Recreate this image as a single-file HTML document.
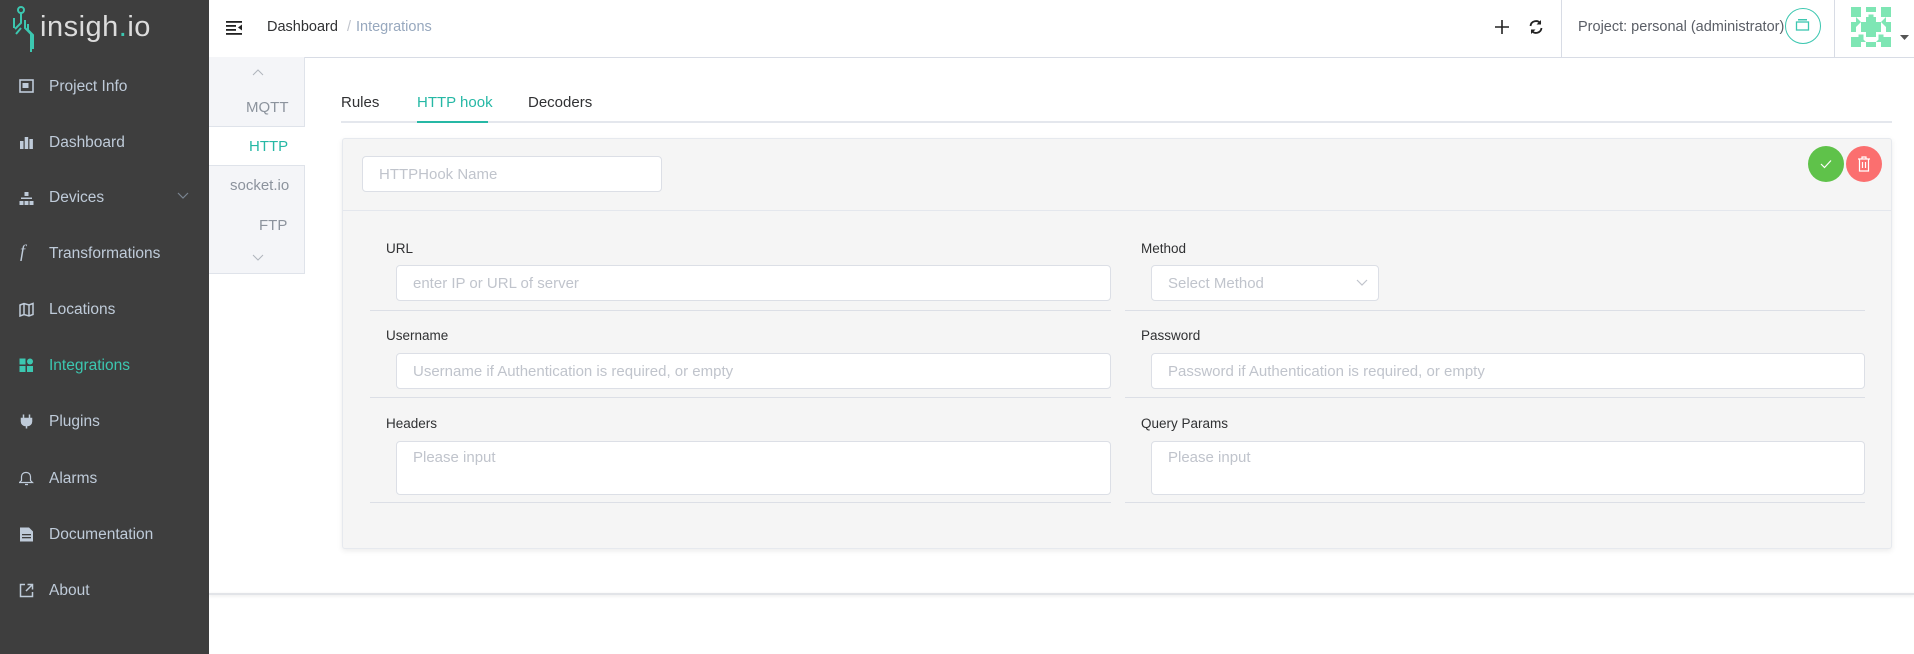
<!DOCTYPE html>
<html><head><meta charset="utf-8"><style>
*{box-sizing:border-box;margin:0;padding:0}
body{width:1914px;height:654px;position:relative;background:#fff;font-family:"Liberation Sans",sans-serif;overflow:hidden}
.a{position:absolute}
#sb{left:0;top:0;width:209px;height:654px;background:#3e3e3e}
.mi{position:absolute;left:49px;font-size:15.5px;color:#bfcbd9}
.ic{position:absolute;left:19px;width:15px;height:15px}
.inp{position:absolute;background:#fff;border:1px solid #dcdfe6;border-radius:4px;font-size:15px;color:#c0c4cc;padding-left:16px;display:flex;align-items:center}
.lbl{position:absolute;font-size:13.5px;color:#303133}
.ln{position:absolute;height:1px;background:#dcdfe6}
</style></head><body>
<div id="sb" class="a">
<svg class="a" style="left:10px;top:4px" width="28" height="48" viewBox="0 0 28 48"><g fill="none" stroke="#3cc7b0" stroke-width="2"><circle cx="11" cy="6" r="3"/><path d="M11 9v10l-6 6M4 14v10M15 16v8l6 6v18M18 20v6l5 5v14M11 24l-5 6"/></g></svg>
<div class="a" style="left:40px;top:11px;font-size:29px;color:#dcdcdc;letter-spacing:0.5px">insigh<span style="color:#3cc7b0">.</span>io</div>
<svg class="ic" style="top:79px" viewBox="0 0 15 15"><rect x="1" y="1" width="13" height="12" fill="none" stroke="#bfcbd9" stroke-width="1.6"/><rect x="3.5" y="4" width="6" height="5" fill="#bfcbd9"/></svg>
<div class="mi" style="top:78px">Project Info</div>
<svg class="ic" style="top:135px" viewBox="0 0 15 15"><rect x="1" y="6" width="3.5" height="8" fill="#bfcbd9"/><rect x="5.7" y="2" width="3.5" height="12" fill="#bfcbd9"/><rect x="10.4" y="4" width="3.5" height="10" fill="#bfcbd9"/></svg>
<div class="mi" style="top:134px">Dashboard</div>
<svg class="ic" style="top:191px" viewBox="0 0 15 15"><g fill="#bfcbd9"><rect x="5.5" y="1" width="4" height="4"/><rect x="0.5" y="10" width="4" height="4"/><rect x="5.5" y="10" width="4" height="4"/><rect x="10.5" y="10" width="4" height="4"/><rect x="2" y="6.5" width="11" height="1.5"/></g></svg>
<div class="mi" style="top:189px">Devices</div>
<svg class="a" style="left:177px;top:192px" width="12" height="8" viewBox="0 0 12 8"><path d="M1 1l5 5 5-5" fill="none" stroke="#7a8490" stroke-width="1.2"/></svg>
<div class="a" style="left:20px;top:241px;font-size:18px;font-style:italic;color:#bfcbd9;font-family:'Liberation Serif',serif">f</div>
<div class="mi" style="top:245px">Transformations</div>
<svg class="ic" style="top:302px" viewBox="0 0 15 15"><path d="M1 3l4-1.5 5 1.5 4-1.5v11l-4 1.5-5-1.5-4 1.5z M5 1.5v11 M10 3v11" fill="none" stroke="#bfcbd9" stroke-width="1.5"/></svg>
<div class="mi" style="top:301px">Locations</div>
<svg class="ic" style="top:358px" viewBox="0 0 15 15"><g fill="#3cc7b0"><rect x="0.5" y="0.5" width="6" height="6"/><circle cx="11" cy="3.5" r="3"/><rect x="0.5" y="8" width="6" height="6"/><rect x="8" y="8" width="6" height="6"/></g></svg>
<div class="mi" style="top:357px;color:#3cc7b0">Integrations</div>
<svg class="ic" style="top:414px" viewBox="0 0 15 15"><path d="M4.5 0.5v4M10.5 0.5v4M2.5 4.5h10v3a4 4 0 0 1-4 4h-2a4 4 0 0 1-4-4z M7.5 11v3.5" fill="#bfcbd9" stroke="#bfcbd9" stroke-width="1.5"/></svg>
<div class="mi" style="top:413px">Plugins</div>
<svg class="ic" style="top:471px" viewBox="0 0 15 15"><path d="M7.5 1.5a4 4 0 0 1 4 4v4l2 2h-13l2-2v-4a4 4 0 0 1 4-4z M6 13.5h3" fill="none" stroke="#bfcbd9" stroke-width="1.2"/></svg>
<div class="mi" style="top:470px">Alarms</div>
<svg class="ic" style="top:527px" viewBox="0 0 15 15"><path d="M1 0.5h9l4 4v10h-13z" fill="#bfcbd9"/><rect x="3" y="7" width="9" height="1.3" fill="#3e3e3e"/><rect x="3" y="10" width="9" height="1.3" fill="#3e3e3e"/></svg>
<div class="mi" style="top:526px">Documentation</div>
<svg class="ic" style="top:583px" viewBox="0 0 15 15"><path d="M6 1.5H1.5v12h12V9 M8.5 1.5h5v5 M13.5 1.5L7 8" fill="none" stroke="#bfcbd9" stroke-width="1.5"/></svg>
<div class="mi" style="top:582px">About</div>
</div>

<div class="a" style="left:209px;top:57px;width:1705px;height:1px;background:#d8dce5"></div>
<svg class="a" style="left:226px;top:20px" width="17" height="15" viewBox="0 0 17 15"><g fill="#222"><rect x="0" y="1" width="16" height="1.8"/><rect x="0" y="5" width="10" height="1.8"/><rect x="0" y="9" width="10" height="1.8"/><rect x="0" y="13" width="16" height="1.8"/><path d="M16 4.5v6l-4-3z"/></g></svg>
<div class="a" style="left:267px;top:19px;font-size:14.5px;color:#303133">Dashboard <span style="color:#c0c4cc;margin:0 5px">/</span><span style="color:#97a8be">Integrations</span></div>
<svg class="a" style="left:1494px;top:19px" width="16" height="16" viewBox="0 0 16 16"><path d="M8 1v14M1 8h14" stroke="#222" stroke-width="1.6"/></svg>
<svg class="a" style="left:1528px;top:19px" width="16" height="16" viewBox="0 0 16 16"><path d="M2.5 7a5.5 5.5 0 0 1 10-2.5M13.5 9a5.5 5.5 0 0 1-10 2.5" fill="none" stroke="#222" stroke-width="1.8"/><path d="M13 1v4.5H8.5zM3 15v-4.5h4.5z" fill="#222"/></svg>
<div class="a" style="left:1561px;top:0;width:1px;height:57px;background:#d8dce5"></div>
<div class="a" style="left:1578px;top:19px;font-size:14.5px;color:#5a5e66">Project: personal (administrator)</div>
<div class="a" style="left:1785px;top:8px;width:36px;height:36px;border:1.3px solid #3cc7b0;border-radius:50%"></div>
<svg class="a" style="left:1795px;top:18px" width="16" height="14" viewBox="0 0 16 14"><rect x="1.5" y="4" width="12" height="8" fill="none" stroke="#3cc7b0" stroke-width="1.3"/><rect x="3" y="1" width="9" height="1.5" fill="#3cc7b0"/></svg>
<div class="a" style="left:1834px;top:0;width:1px;height:57px;background:#d8dce5"></div>
<svg class="a" style="left:1851px;top:7px" width="40" height="40" viewBox="0 0 8 8"><rect width="8" height="8" fill="#fff"/><g fill="#7ee6b4"><path d="M0 0h2v2H0zM3 0h2v1H3zM6 0h2v2H6zM1 2l1 1-1 1zM3 2h2v1H3zM7 2l-1 1 1 1zM0 3h1v2H0zM2 3h1v2H2zM5 3h1v2H5zM7 3h1v2H7zM3 4h2v1H3zM3 5h2v1H3zM0 6h2v2H0zM6 6h2v2H6zM3 7h2v1H3zM2 6l1 1H2zM6 6l-1 1h1z"/><path d="M3.5 1.5h1v1h-1zM1.5 5.5h1v1h-1zM5.5 5.5h1v1h-1z"/><path d="M1 1h1v1H1zM6 1h1v1H6zM3 3h2v2H3z"/></g></svg>
<svg class="a" style="left:1900px;top:35px" width="9" height="5" viewBox="0 0 9 5"><path d="M0 0h9L4.5 5z" fill="#555"/></svg>

<div class="a" style="left:209px;top:57px;width:96px;height:70px;background:#f4f5f8;border:1px solid #dfe3ea;border-top:0;border-left:0"></div>
<svg class="a" style="left:252px;top:69px" width="12" height="7" viewBox="0 0 12 7"><path d="M1 6l5-5 5 5" fill="none" stroke="#b0b5bd" stroke-width="1"/></svg>
<div class="a" style="left:246px;top:99px;font-size:15px;color:#8c939d">MQTT</div>
<div class="a" style="left:249px;top:138px;font-size:15px;color:#26b8a5">HTTP</div>
<div class="a" style="left:209px;top:165px;width:96px;height:109px;background:#f4f5f8;border:1px solid #dfe3ea;border-left:0"></div>
<div class="a" style="left:230px;top:177px;font-size:15px;color:#8c939d">socket.io</div>
<div class="a" style="left:259px;top:217px;font-size:15px;color:#8c939d">FTP</div>
<svg class="a" style="left:252px;top:254px" width="12" height="7" viewBox="0 0 12 7"><path d="M1 1l5 5 5-5" fill="none" stroke="#b0b5bd" stroke-width="1"/></svg>

<div class="a" style="left:341px;top:94px;font-size:15px;color:#303133">Rules</div>
<div class="a" style="left:417px;top:94px;font-size:15px;color:#26b8a5">HTTP hook</div>
<div class="a" style="left:528px;top:94px;font-size:15px;color:#303133">Decoders</div>
<div class="a" style="left:341px;top:121px;width:1551px;height:2px;background:#e4e7ed"></div>
<div class="a" style="left:417px;top:121px;width:71px;height:2px;background:#26b8a5"></div>

<div class="a" style="left:342px;top:138px;width:1550px;height:411px;background:#f5f5f5;border:1px solid #e6e9ee;border-radius:3px;box-shadow:0 2px 6px rgba(0,0,0,.08)"></div>
<div class="a" style="left:343px;top:210px;width:1548px;height:1px;background:#e4e7ed"></div>
<div class="inp" style="left:362px;top:156px;width:300px;height:36px">HTTPHook Name</div>
<div class="a" style="left:1808px;top:146px;width:36px;height:36px;border-radius:50%;background:#5fc24a"></div>
<svg class="a" style="left:1820px;top:159px" width="12" height="10" viewBox="0 0 12 10"><path d="M1 5l3.5 3.5L11 1.5" fill="none" stroke="#fff" stroke-width="1.2"/></svg>
<div class="a" style="left:1846px;top:146px;width:36px;height:36px;border-radius:50%;background:#fb6f6f"></div>
<svg class="a" style="left:1857px;top:156px" width="14" height="16" viewBox="0 0 14 16"><path d="M1 3h12M5 3V1h4v2M2.5 3v12h9V3M5.5 6v6M8.5 6v6" fill="none" stroke="#fff" stroke-width="1.2"/></svg>

<div class="lbl" style="left:386px;top:241px">URL</div>
<div class="inp" style="left:396px;top:265px;width:715px;height:36px">enter IP or URL of server</div>
<div class="ln" style="left:370px;top:310px;width:741px"></div>
<div class="lbl" style="left:1141px;top:241px">Method</div>
<div class="inp" style="left:1151px;top:265px;width:228px;height:36px">Select Method</div>
<svg class="a" style="left:1356px;top:279px" width="12" height="7" viewBox="0 0 12 7"><path d="M1 1l5 5 5-5" fill="none" stroke="#c0c4cc" stroke-width="1.2"/></svg>
<div class="ln" style="left:1125px;top:310px;width:740px"></div>

<div class="lbl" style="left:386px;top:328px">Username</div>
<div class="inp" style="left:396px;top:353px;width:715px;height:36px">Username if Authentication is required, or empty</div>
<div class="ln" style="left:370px;top:397px;width:741px"></div>
<div class="lbl" style="left:1141px;top:328px">Password</div>
<div class="inp" style="left:1151px;top:353px;width:714px;height:36px">Password if Authentication is required, or empty</div>
<div class="ln" style="left:1125px;top:397px;width:740px"></div>

<div class="lbl" style="left:386px;top:416px">Headers</div>
<div class="inp" style="left:396px;top:441px;width:715px;height:54px;align-items:flex-start;padding-top:7px">Please input</div>
<div class="ln" style="left:370px;top:502px;width:741px"></div>
<div class="lbl" style="left:1141px;top:416px">Query Params</div>
<div class="inp" style="left:1151px;top:441px;width:714px;height:54px;align-items:flex-start;padding-top:7px">Please input</div>
<div class="ln" style="left:1125px;top:502px;width:740px"></div>

<div class="a" style="left:209px;top:593px;width:1705px;height:2px;background:#e2e4e8;box-shadow:0 1px 3px rgba(0,0,0,.1)"></div>
</body></html>
